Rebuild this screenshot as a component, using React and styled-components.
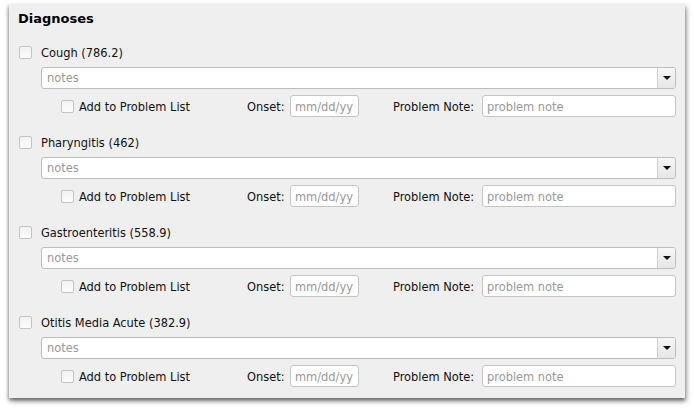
import React from 'react'
import styled, { createGlobalStyle } from 'styled-components'

const GlobalStyle = createGlobalStyle`
  html, body{
    min-height:412px;
  }
  body{
    margin:0;
    background:#fff;
    font-family:"DejaVu Sans Condensed","DejaVu Sans",sans-serif;
    font-size:12.7px;
    color:#111;
  }
`

const Panel = styled.div`
  box-sizing:border-box;
  margin:4px 10px 14px 9px;
  height:394px;
  padding:7px 9px 0 9px;
  background:#efefef;
  box-shadow:1px 3px 5px rgba(0,0,0,.5), -1px 2px 3px rgba(0,0,0,.25);
`

const Title = styled.div`
  font-family:"DejaVu Sans",sans-serif;
  font-weight:bold;
  font-size:13px;
  line-height:16px;
  height:16px;
  margin-bottom:1px;
  color:#000;
`

const Item = styled.div`
  margin-top:17px;
`

const HeadRow = styled.div`
  display:flex;
  align-items:center;
  height:16px;
  padding-left:1px;
`

const Check = styled.span`
  box-sizing:border-box;
  width:13px;
  height:13px;
  flex:none;
  border:1px solid #c4c4c4;
  border-radius:2px;
  background:linear-gradient(#f2f2f2, #fcfcfc);
  margin-right:${p => p.gap}px;
`

const NotesBox = styled.div`
  box-sizing:border-box;
  display:flex;
  align-items:stretch;
  height:22px;
  margin:7px 0 0 23px;
  border:1px solid #bdbdbd;
  border-radius:3px;
  background:#fff;
`

const NotesText = styled.span`
  flex:1;
  padding-left:5px;
  line-height:20px;
  color:#999;
`

const DropButton = styled.span`
  width:17px;
  display:flex;
  align-items:center;
  justify-content:center;
  border-left:1px solid #cfcfcf;
  border-radius:0 2px 2px 0;
  background:linear-gradient(#f7f7f7, #e6e6e6);

  &::after{
    content:'';
    border-left:4px solid transparent;
    border-right:4px solid transparent;
    border-top:4px solid #111;
  }
`

const SubRow = styled.div`
  display:flex;
  align-items:center;
  height:22px;
  margin-top:6px;
  padding-left:43px;
`

const CheckGroup = styled.label`
  display:flex;
  align-items:center;
  width:186px;
`

const FieldLabel = styled.span`
  width:${p => p.w}px;
  flex:none;
  white-space:nowrap;
`

const TextBox = styled.input`
  box-sizing:border-box;
  height:22px;
  width:${p => (p.grow ? 'auto' : `${p.w}px`)};
  flex:${p => (p.grow ? 1 : 'none')};
  min-width:0;
  margin-right:${p => p.after || 0}px;
  padding:0 4px;
  border:1px solid #c4c4c4;
  border-radius:3px;
  background:#fff;
  font:inherit;
  color:#111;
  outline:none;

  &::placeholder{
    color:#999;
  }
`

const diagnoses = [
  'Cough (786.2)',
  'Pharyngitis (462)',
  'Gastroenteritis (558.9)',
  'Otitis Media Acute (382.9)',
]

const App = () => {
  return (
    <>
      <GlobalStyle />
      <Panel>
        <Title>Diagnoses</Title>
        {diagnoses.map(d => (
          <Item key={d}>
            <HeadRow>
              <Check gap={9} />
              <span>{d}</span>
            </HeadRow>
            <NotesBox>
              <NotesText>notes</NotesText>
              <DropButton />
            </NotesBox>
            <SubRow>
              <CheckGroup>
                <Check gap={5} />
                Add to Problem List
              </CheckGroup>
              <FieldLabel w={43}>Onset:</FieldLabel>
              <TextBox w={69} after={34} placeholder="mm/dd/yy" />
              <FieldLabel w={89}>Problem Note:</FieldLabel>
              <TextBox grow placeholder="problem note" />
            </SubRow>
          </Item>
        ))}
      </Panel>
    </>
  )
}

export default App
